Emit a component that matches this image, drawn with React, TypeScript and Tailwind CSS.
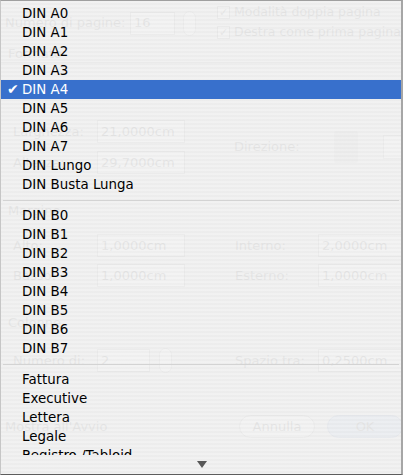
import React from 'react';

const groupA = ['DIN A0', 'DIN A1', 'DIN A2', 'DIN A3', 'DIN A4', 'DIN A5', 'DIN A6', 'DIN A7', 'DIN Lungo', 'DIN Busta Lunga'];
const groupB = ['DIN B0', 'DIN B1', 'DIN B2', 'DIN B3', 'DIN B4', 'DIN B5', 'DIN B6', 'DIN B7'];
const groupC = ['Fattura', 'Executive', 'Lettera', 'Legale', 'Registro /Tabloid'];

const selected = 'DIN A4';

function Field({ value, width }: { value: string; width: string }) {
  return (
    <div className={`${width} h-[23px] bg-white border border-[#9c9c9c] flex items-center px-[3px] whitespace-nowrap`}>
      {value}
    </div>
  );
}

function Stepper() {
  return <div className="w-[13px] h-[25px] rounded-full border border-[#a8a8a8] bg-white" />;
}

function Check({ label }: { label: string }) {
  return (
    <div className="flex items-center gap-[4px] h-[20px] whitespace-nowrap">
      <div className="w-[13px] h-[13px] border border-[#8a8a8a] bg-white flex items-center justify-center text-[11px] leading-none">
        ✓
      </div>
      <span className="text-[12.5px]">{label}</span>
    </div>
  );
}

// dialog sitting behind the popup menu
function Dialog() {
  return (
    <div className="flex flex-col text-[#555] whitespace-nowrap">
      <div className="flex h-[46px]">
        <div className="w-[212px] flex items-center pl-[5px]">
          <span className="w-[125px]">Numero di pagine:</span>
          <Field value="16" width="w-[45px]" />
          <div className="ml-[8px]">
            <Stepper />
          </div>
        </div>
        <div className="flex flex-col pl-[5px] pt-[2px]">
          <Check label="Modalità doppia pagina" />
          <Check label="Destra come prima pagina" />
        </div>
      </div>
      <div className="h-[16px] pl-[8px] leading-[16px]">Formato</div>
      <div className="border-t border-[#8c8c8c] h-[128px] flex flex-col">
        <div className="h-[57px]" />
        <div className="flex">
          <div className="w-[235px] flex flex-col gap-[8px]">
            <div className="flex items-center">
              <span className="w-[97px] pl-[13px]">Larghezza:</span>
              <Field value="21,0000cm" width="w-[88px]" />
            </div>
            <div className="flex items-center">
              <span className="w-[97px] pl-[13px]">Altezza:</span>
              <Field value="29,7000cm" width="w-[88px]" />
            </div>
          </div>
          <div className="flex items-center">
            <span className="w-[100px]">Direzione:</span>
            <div className="w-[24px] h-[32px] bg-[#c4c4c4] rounded-[2px]" />
            <div className="ml-[25px] w-[20px] h-[24px] border border-[#a8a8a8] bg-white" />
          </div>
        </div>
      </div>
      <div className="h-[14px]" />
      <div className="h-[14px] pl-[8px] leading-[14px]">Margine</div>
      <div className="h-[16px]" />
      <div className="flex flex-col gap-[7px]">
        <div className="flex items-center">
          <span className="w-[97px] pl-[13px]">Alto:</span>
          <Field value="1,0000cm" width="w-[88px]" />
          <span className="w-[83px] ml-[50px]">Interno:</span>
          <Field value="2,0000cm" width="w-[85px]" />
        </div>
        <div className="flex items-center">
          <span className="w-[97px] pl-[13px]">Basso:</span>
          <Field value="1,0000cm" width="w-[88px]" />
          <span className="w-[83px] ml-[50px]">Esterno:</span>
          <Field value="1,0000cm" width="w-[85px]" />
        </div>
      </div>
      <div className="h-[29px]" />
      <div className="h-[14px] pl-[8px] leading-[14px]">Colonne</div>
      <div className="h-[18px]" />
      <div className="flex items-center">
        <span className="w-[97px] pl-[13px]">Numero di:</span>
        <Field value="2" width="w-[53px]" />
        <div className="ml-[9px]">
          <Stepper />
        </div>
        <span className="w-[83px] ml-[63px]">Spazio tra:</span>
        <Field value="0,2500cm" width="w-[85px]" />
      </div>
      <div className="h-[42px]" />
      <div className="flex items-center h-[23px]">
        <span className="w-[258px] pl-[5px]">Mostra all'Avvio</span>
        <div className="w-[82px] h-[23px] rounded-full border border-[#9a9a9a] bg-white flex items-center justify-center">
          Annulla
        </div>
        <div className="ml-[12px] w-[82px] h-[23px] rounded-full border border-[#6a86b8] bg-[#a8c4ec] flex items-center justify-center">
          OK
        </div>
      </div>
    </div>
  );
}

function Item({ label }: { label: string }) {
  const on = label === selected;
  return (
    <div className={`flex h-[19px] leading-[19px] whitespace-nowrap ${on ? 'bg-[#3870cc] text-white' : 'text-black'}`}>
      <span className="w-[21px] pl-[6px] text-[14px]">{on ? '✔' : ''}</span>
      <span>{label}</span>
    </div>
  );
}

function Separator() {
  return (
    <div className="h-[12px] flex items-center px-[2px]">
      <div className="h-px w-full bg-[#d3d3d3]" />
    </div>
  );
}

export default function App() {
  return (
    <div className="relative w-[403px] h-[475px] overflow-hidden bg-[#e8e8e8] text-[13px] text-black font-['DejaVu_Sans','Liberation_Sans',sans-serif]">
      <Dialog />

      {/* popup menu over the dialog */}
      <div className="absolute inset-0 flex flex-col text-[13.4px] border-t border-t-[#9f9f9f] border-l border-l-[#c6c6c6] border-r-2 border-r-[#a6a6a6] border-b border-b-[#5c5c5c] bg-[repeating-linear-gradient(to_bottom,rgba(242,242,242,0.92)_0px,rgba(242,242,242,0.92)_2px,rgba(237,237,237,0.92)_2px,rgba(237,237,237,0.92)_4px)]">
        <div className="flex-1 overflow-hidden pt-[3px]">
          {groupA.map((l) => (
            <Item key={l} label={l} />
          ))}
          <Separator />
          {groupB.map((l) => (
            <Item key={l} label={l} />
          ))}
          <Separator />
          {groupC.map((l) => (
            <Item key={l} label={l} />
          ))}
        </div>
        <div className="h-[19px] flex items-center justify-center">
          <svg width="10" height="7" viewBox="0 0 10 7" className="ml-[2px] mt-[-1px]">
            <polygon points="0,0 10,0 5,7" fill="#575757" />
          </svg>
        </div>
      </div>
    </div>
  );
}
